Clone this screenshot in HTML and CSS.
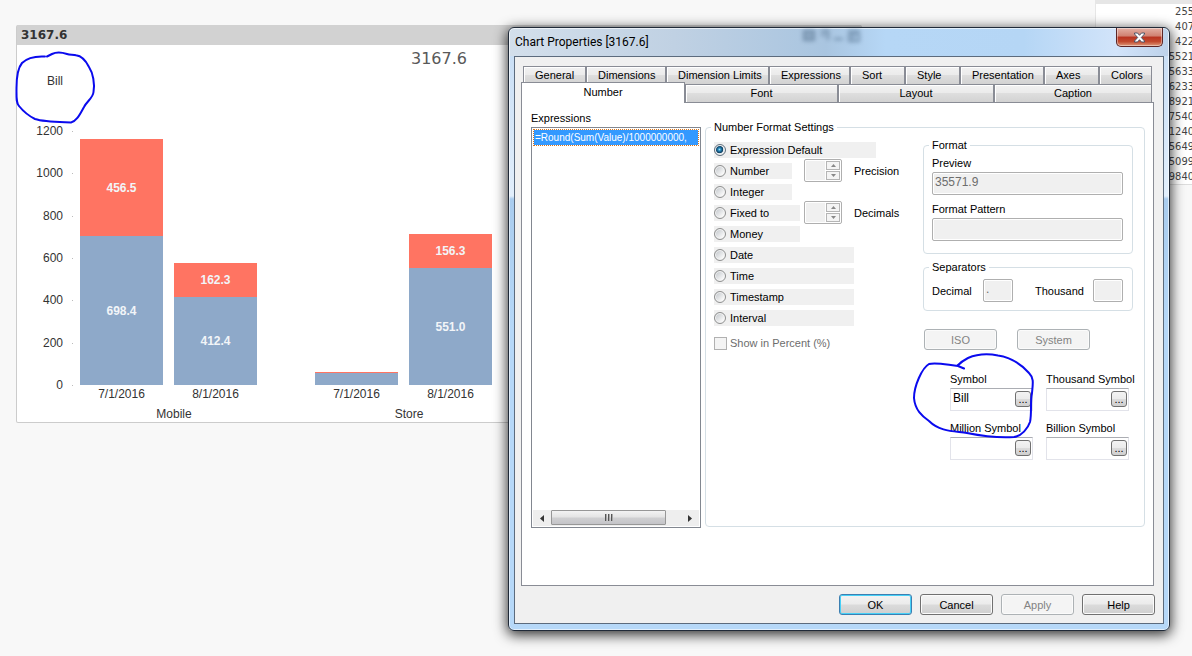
FILE: index.html
```html
<!DOCTYPE html>
<html lang="en">
<head>
<meta charset="utf-8">
<title>Chart Properties</title>
<link rel="stylesheet" href="styles.css">
</head>
<body>
<main class="desktop">
  <section class="chart">
    <h2 class="chart-caption">3167.6</h2>
    <div class="chart-body">
      <h3 class="chart-title">3167.6</h3>
      <p class="unit">Bill</p>
      <div class="chart-area">
        <ul class="axis">
          <li>1200</li><li>1000</li><li>800</li><li>600</li><li>400</li><li>200</li><li>0</li>
        </ul>
        <div class="groups">
          <div class="group">
            <div class="bars">
              <div class="bar"><span class="top" style="height:97px">456.5</span><span class="base" style="height:149px">698.4</span></div>
              <div class="bar"><span class="top" style="height:34px">162.3</span><span class="base" style="height:88px">412.4</span></div>
            </div>
            <div class="dates"><span>7/1/2016</span><span>8/1/2016</span></div>
            <p class="group-name">Mobile</p>
          </div>
          <div class="group">
            <div class="bars">
              <div class="bar"><span class="top" style="height:1px"></span><span class="base" style="height:12px"></span></div>
              <div class="bar"><span class="top" style="height:34px">156.3</span><span class="base" style="height:117px">551.0</span></div>
            </div>
            <div class="dates"><span>7/1/2016</span><span>8/1/2016</span></div>
            <p class="group-name">Store</p>
          </div>
        </div>
      </div>
    </div>
  </section>

  <table class="sheet">
    <thead><tr><th></th></tr></thead>
    <tbody>
      <tr><td>255</td></tr><tr><td>407</td></tr><tr><td>422</td></tr><tr><td>5521</td></tr>
      <tr><td>5633</td></tr><tr><td>6233</td></tr><tr><td>8921</td></tr><tr><td>7540</td></tr>
      <tr><td>1240</td></tr><tr><td>5649</td></tr><tr><td>5099</td></tr><tr><td>9840</td></tr>
    </tbody>
  </table>

  <section class="dialog" role="dialog" aria-labelledby="dialog-title">
    <header class="titlebar">
      <h1 id="dialog-title">Chart Properties [3167.6]</h1>
      <svg class="ghost" width="62" height="16" viewBox="0 0 62 16" aria-hidden="true"><path d="M3 3h10v9H3zM6 3v9M10 3v9M20 3h7v9M20 7h4M33 11h9M47 3h12M48 6h10v7H48zM52 6v6" fill="none" stroke="#3d5a78" stroke-width="2"/></svg>
      <button class="close" aria-label="Close">
        <svg width="13" height="11" viewBox="0 0 13 11"><path d="M1.5 1h3l2 2.3L8.500 1h3v1L8.300 5.500l3.200 3.500v1h-3L6.500 7.700 4.500 10h-3V9l3.200-3.500L1.500 2z" fill="#fff" stroke="#4c5468"/></svg>
      </button>
    </header>
    <div class="client">
      <nav class="tabs" role="tablist">
        <div class="tab-row first">
          <button class="tab" role="tab">General</button><button class="tab" role="tab">Dimensions</button><button class="tab" role="tab">Dimension Limits</button><button class="tab" role="tab">Expressions</button><button class="tab" role="tab">Sort</button><button class="tab" role="tab">Style</button><button class="tab" role="tab">Presentation</button><button class="tab" role="tab">Axes</button><button class="tab" role="tab">Colors</button>
        </div>
        <div class="tab-row second">
          <button class="tab selected" role="tab" aria-selected="true">Number</button><button class="tab" role="tab">Font</button><button class="tab" role="tab">Layout</button><button class="tab" role="tab">Caption</button>
        </div>
      </nav>
      <div class="page">
        <div class="expressions">
          <p class="label" id="expr-label">Expressions</p>
          <div class="listbox" role="listbox" aria-labelledby="expr-label">
            <div class="option" role="option" aria-selected="true">=Round(Sum(Value)/1000000000,</div>
            <div class="scrollbar">
              <button class="arrow" aria-label="Scroll left"><svg width="4" height="7" viewBox="0 0 4 7"><path d="M4 0v7L0 3.500z" fill="#333"/></svg></button>
              <div class="thumb"><i></i><i></i><i></i></div>
              <button class="arrow" aria-label="Scroll right"><svg width="4" height="7" viewBox="0 0 4 7"><path d="M0 0v7l4-3.500z" fill="#333"/></svg></button>
            </div>
          </div>
        </div>
        <fieldset class="box settings">
          <legend>Number Format Settings</legend>
          <div class="settings-grid">
            <div class="formats">
              <div class="format"><label class="radio w-default"><input type="radio" name="f" checked>Expression Default</label></div>
              <div class="format"><div class="lead"><label class="radio w-short"><input type="radio" name="f">Number</label></div>
                <span class="spinner"><input id="precision" disabled><span class="steps"><button disabled aria-label="Up"><svg width="5" height="3" viewBox="0 0 5 3"><path d="M0 3h5L2.500 0z" fill="#888"/></svg></button><button disabled aria-label="Down"><svg width="5" height="3" viewBox="0 0 5 3"><path d="M0 0h5L2.500 3z" fill="#888"/></svg></button></span></span>
                <label class="side" for="precision">Precision</label></div>
              <div class="format"><label class="radio w-short"><input type="radio" name="f">Integer</label></div>
              <div class="format"><div class="lead"><label class="radio w-medium"><input type="radio" name="f">Fixed to</label></div>
                <span class="spinner"><input id="decimals" disabled><span class="steps"><button disabled aria-label="Up"><svg width="5" height="3" viewBox="0 0 5 3"><path d="M0 3h5L2.500 0z" fill="#888"/></svg></button><button disabled aria-label="Down"><svg width="5" height="3" viewBox="0 0 5 3"><path d="M0 0h5L2.500 3z" fill="#888"/></svg></button></span></span>
                <label class="side" for="decimals">Decimals</label></div>
              <div class="format"><label class="radio w-medium"><input type="radio" name="f">Money</label></div>
              <div class="format"><label class="radio w-long"><input type="radio" name="f">Date</label></div>
              <div class="format"><label class="radio w-long"><input type="radio" name="f">Time</label></div>
              <div class="format"><label class="radio w-long"><input type="radio" name="f">Timestamp</label></div>
              <div class="format"><label class="radio w-long"><input type="radio" name="f">Interval</label></div>
              <label class="percent"><input type="checkbox" disabled>Show in Percent (%)</label>
            </div>
            <div class="details">
              <fieldset class="box pattern">
                <legend>Format</legend>
                <label for="preview">Preview</label>
                <input class="field" id="preview" value="35571.9" disabled>
                <label for="pattern">Format Pattern</label>
                <input class="field" id="pattern" disabled>
              </fieldset>
              <fieldset class="box separators">
                <legend>Separators</legend>
                <div class="separator-row">
                  <label for="dec">Decimal</label><input class="field" id="dec" value="." disabled>
                  <label class="thousand" for="tho">Thousand</label><input class="field" id="tho" disabled>
                </div>
              </fieldset>
              <div class="presets"><button class="button" disabled>ISO</button><button class="button" disabled>System</button></div>
              <div class="symbols">
                <div class="symbol"><label for="s1">Symbol</label><div class="entry"><input id="s1" value="Bill"><button aria-label="Edit symbol">...</button></div></div>
                <div class="symbol"><label for="s2">Thousand Symbol</label><div class="entry"><input id="s2"><button aria-label="Edit thousand symbol">...</button></div></div>
                <div class="symbol"><label for="s3">Million Symbol</label><div class="entry"><input id="s3"><button aria-label="Edit million symbol">...</button></div></div>
                <div class="symbol"><label for="s4">Billion Symbol</label><div class="entry"><input id="s4"><button aria-label="Edit billion symbol">...</button></div></div>
              </div>
            </div>
          </div>
        </fieldset>
      </div>
      <footer class="actions">
        <button class="button primary">OK</button><button class="button">Cancel</button><button class="button" disabled>Apply</button><button class="button">Help</button>
      </footer>
    </div>
  </section>

  <svg class="ink" width="1192" height="656" viewBox="0 0 1192 656" aria-hidden="true">
    <path d="M45 56.500C36 56 27 58 22 63C17 69 16.500 79 16.500 88C16.500 97 16 103 19 106C23 111 29 116 35 119C44 122 59 122 71 122.500C77 121 80 114 84 107C87 101 93 98 93.500 92C95 84 93 73 89 67C86 61 82 56 76 55.300C73 54.500 70 55 67 54C61 52 56 52 52 54L47 56.500"/>
    <path d="M964 368.500L958 366C948 365 936 362 929 364C922 368 914 386 914 398C915 410 922 416 929 421C940 432 955 431 967 433C982 436 999 438 1014 437C1022 436 1028 428 1030 422C1032 413 1030 402 1032 393C1033 383 1034 378 1029 373C1020 363 1008 357 998 355.500C985 353 975 355 968 358C962 361 960 363 957 366"/>
  </svg>
</main>
</body>
</html>
```

FILE: styles.css
```css
* { box-sizing: border-box; }
body {
  margin: 0;
  background: #f8f8f8;
  color: #000;
  font: 11px/14px "Liberation Sans", Arial, sans-serif;
}
h1, h2, h3, p, ul { margin: 0; padding: 0; font-weight: normal; }
button, input { margin: 0; padding: 0; font: inherit; color: inherit; }
.desktop { position: relative; min-height: 100vh; overflow: hidden; }

/* Chart window */
.chart {
  position: absolute;
  left: 16px;
  top: 25px;
  width: 846px;
  color: #333;
  background: #fff;
  border: 1px solid #ccc;
  border-top: 0;
  border-radius: 2px;
  font-size: 12px;
}
.chart-caption {
  padding: 0 4px;
  background: #d2d2d2;
  font: bold 12px/20px "DejaVu Sans", Verdana, sans-serif;
}
.chart-title {
  padding-top: 4px;
  text-align: center;
  color: #595959;
  font: 16px/20px "DejaVu Sans", Verdana, sans-serif;
}
.unit { width: 76px; padding-top: 5px; text-align: center; }
.chart-area { display: flex; margin-top: 36px; }
.axis {
  display: flex;
  flex-direction: column;
  justify-content: space-between;
  width: 56px;
  height: 268px;
  list-style: none;
  text-align: right;
}
.axis li { position: relative; padding-right: 10px; }
.axis li::after {
  content: "";
  position: absolute;
  right: 0;
  top: 7px;
  width: 1px;
  height: 1px;
  background: #bbb;
}
.groups { display: flex; gap: 47px; padding: 7px 0 0 7px; }
.bars, .dates { display: flex; align-items: flex-end; }
.bars { height: 254px; gap: 11px; }
.bar { width: 83px; }
.bar span {
  display: flex;
  align-items: center;
  justify-content: center;
  color: #f2f5f8;
  font-weight: bold;
}
.top { background: #ff7462; }
.base { background: #8ea9c9; }
.dates { gap: 11px; padding: 2px 11px 5px 0; }
.dates span { width: 83px; text-align: center; }
.group-name { text-align: center; line-height: 16px; }

/* Data sheet at the screen edge */
.sheet {
  position: absolute;
  left: 1095px;
  top: 0;
  width: 99px;
  border-collapse: collapse;
  background: #fff;
  border-left: 1px solid #e6e6e6;
  border-bottom: 1px solid #ddd;
  color: #444;
  font: 11px/15px "DejaVu Sans Condensed", "Noto Sans", sans-serif;
}
.sheet th { height: 4px; padding: 0; background: #e6e6e6; }
.sheet td { padding: 0; text-align: right; }

/* Dialog frame */
.dialog {
  position: absolute;
  left: 508px;
  top: 27px;
  width: 662px;
  padding: 0 5px 6px;
  border: 1px solid #202a38;
  border-radius: 6px;
  background:
    linear-gradient(90deg, #d3dfeb 0, #c0d1e3 25%, #a9c5e0 48%, #b6d7f6 57%, #b5d6f5 78%, #d2e4fa 92%, #bdd2ea 100%) top / 100% 28px no-repeat,
    linear-gradient(#cadff5 28px, #e2effc 168px, #a9ccee 171px, #b6d8f8 300px, #b6d8f8);
  box-shadow: inset 0 0 0 1px rgba(255, 255, 255, .6), 0 3px 13px 1px rgba(0, 0, 0, .8);
}
.titlebar { display: flex; align-items: flex-start; height: 28px; }
.titlebar h1 {
  flex: 1;
  padding-left: 1px;
  font: 12px/28px Roboto, "Open Sans", sans-serif;
}
.ghost { margin-right: 253px; filter: blur(2px); opacity: .55; }
.close {
  display: flex;
  align-items: center;
  justify-content: center;
  width: 47px;
  height: 19px;
  margin-right: 1px;
  border: 1px solid #5c2525;
  border-top: 0;
  border-radius: 0 0 5px 5px;
  background: linear-gradient(#e3b0a5, #d08070 45%, #b83220 50%, #c24a2e 75%, #df9a7b);
  box-shadow: inset 0 0 0 1px rgba(255, 255, 255, .4);
}
.client {
  padding: 9px 9px 8px 6px;
  border: 1px solid #5c6b7d;
  background: #f0f0f0;
}

/* Tabs */
.tab-row { display: grid; padding-right: 2px; }
.first { grid-template-columns: 63fr 80fr 103fr 81fr 55fr 55fr 84fr 55fr 53fr; padding-left: 2px; }
.second { grid-template-columns: 164fr 153fr 156fr 158fr; align-items: end; }
.tab {
  height: 18px;
  padding: 0;
  border: 1px solid #898c95;
  border-width: 1px 1px 0 1px;
  background: linear-gradient(#f2f2f2, #ebebeb 45%, #dedede 50%, #d2d2d2);
  box-shadow: inset 1px 1px #fff;
  line-height: 17px;
  white-space: nowrap;
}
.first .tab { padding-left: 11px; text-align: left; }
.tab.selected {
  position: relative;
  height: 21px;
  margin: -3px 0 -1px;
  padding-bottom: 2px;
  background: #fff;
}
.page {
  display: flex;
  gap: 4px;
  padding: 8px 8px 57px 9px;
  border: 1px solid #898c95;
  background: #fff;
}
.expressions { display: flex; flex-direction: column; gap: 2px; width: 170px; }
.listbox {
  display: flex;
  flex: 1;
  flex-direction: column;
  justify-content: space-between;
  padding: 1px;
  border: 1px solid #828790;
}
.option {
  overflow: hidden;
  padding-left: 1px;
  border: 1px dotted #d8741c;
  background: #3399ff;
  background-clip: padding-box;
  color: #fff;
  font-size: 10px;
  line-height: 15px;
  white-space: nowrap;
}
.scrollbar { display: flex; height: 16px; background: #eee; }
.arrow {
  display: flex;
  align-items: center;
  justify-content: center;
  width: 18px;
  border: 0;
  background: none;
}
.arrow:last-child { margin-left: auto; }
.thumb {
  display: flex;
  align-items: center;
  justify-content: center;
  gap: 2px;
  width: 115px;
  height: 15px;
  border: 1px solid #979797;
  border-radius: 1px;
  background: linear-gradient(#f3f3f3, #e4e4e4 48%, #d0d0d2 52%, #c4c4c8);
}
.thumb i { width: 1px; height: 7px; background: #555; box-shadow: 1px 0 #aaa; }

/* Group boxes */
.box { min-width: 0; margin: 0; border: 1px solid #d5dfe5; border-radius: 4px; }
.box legend { margin-left: -3px; padding: 0 3px; }
.settings { flex: 1; margin: 9px 0 1px; padding: 4px 11px 66px 8px; }
.settings-grid { display: grid; grid-template-columns: 209px 1fr; }
.formats { padding-top: 1px; }
.format { display: flex; align-items: center; height: 21px; }
.lead { width: 90px; }
.radio { display: flex; align-items: center; gap: 4px; height: 16px; background: #f0f0f0; }
.w-default { width: 162px; }
.w-short { width: 78px; }
.w-medium { width: 86px; }
.w-long { width: 140px; }
.radio input {
  appearance: none;
  width: 12px;
  height: 12px;
  border: 1px solid #8e8f8f;
  border-radius: 50%;
  background: linear-gradient(135deg, #c8ccd0 15%, #fafafa 80%);
  box-shadow: inset 0 0 0 1px #f4f4f4;
}
.radio input:checked {
  border-color: #5f6f7d;
  background: radial-gradient(circle at 45% 45%, #9be3ff 0, #2583b5 20%, #0b3a5c 44%, #dfe5e9 52%);
}
.spinner {
  display: flex;
  flex: none;
  width: 38px;
  height: 23px;
  padding: 1px;
  border: 1px solid #afafaf;
  border-radius: 2px;
  background: #fff;
}
.spinner input { width: 19px; border: 0; background: #f0f0f0; }
.steps { display: flex; flex: 1; flex-direction: column; gap: 1px; padding-left: 1px; }
.steps button {
  display: flex;
  flex: 1;
  align-items: center;
  justify-content: center;
  border: 1px solid #b5b5b5;
  background: #f4f4f4;
}
.side { padding-left: 12px; }
.percent { display: flex; align-items: center; gap: 3px; padding-top: 8px; color: #6d6d6d; }
.percent input {
  appearance: none;
  width: 13px;
  height: 13px;
  border: 1px solid #b1b1b1;
  background: #f4f4f4;
}
.pattern { padding: 4px 9px 12px 8px; }
.pattern label { display: block; margin-bottom: 2px; }
.field {
  display: block;
  width: 100%;
  height: 23px;
  padding: 0 2px 3px;
  border: 1px solid #afafaf;
  border-radius: 2px;
  background: #f0f0f0;
  box-shadow: inset 0 0 0 1px #fff;
  color: #6d6d6d;
  font-size: 12px;
}
.pattern .field + label { margin-top: 7px; }
.separators { margin-top: 6px; padding: 5px 9px 8px 8px; }
.separator-row { display: flex; align-items: center; }
.separator-row label { width: 51px; }
.separator-row .thousand { width: 58px; margin-left: auto; }
.separator-row .field { width: 30px; }
.presets { display: flex; gap: 20px; padding: 18px 0 0 1px; }
.button {
  width: 73px;
  height: 21px;
  border: 1px solid #707070;
  border-radius: 3px;
  background: linear-gradient(#f3f3f3, #ebebeb 48%, #dbdbdb 52%, #cfcfcf);
  box-shadow: inset 0 0 0 1px #fbfbfb;
}
.button.primary { border-color: #3c7fb1; box-shadow: inset 0 0 0 1px #46d0f7; }
.button:disabled { border-color: #adb2b5; background: #f4f4f4; color: #838383; }
.symbols {
  display: grid;
  grid-template-columns: 83px 83px;
  gap: 10px 13px;
  padding: 22px 0 0 27px;
}
.symbol label { display: block; margin-bottom: 2px; white-space: nowrap; }
.entry {
  display: flex;
  height: 23px;
  padding: 2px 1px 3px 2px;
  border: 1px solid #e2e3ea;
  border-top-color: #abadb3;
}
.entry input {
  width: 62px;
  padding-bottom: 2px;
  border: 0;
  outline: 0;
  background: none;
  font-size: 12px;
}
.entry button {
  width: 16px;
  border: 1px solid #707070;
  border-radius: 3px;
  background: linear-gradient(#f3f3f3, #ebebeb 48%, #dbdbdb 52%, #cfcfcf);
  line-height: 14px;
}
.actions { display: flex; justify-content: flex-end; gap: 8px; margin: 8px -1px 0 0; }

/* Pen marks drawn over both windows */
.ink {
  position: absolute;
  left: 0;
  top: 0;
  fill: none;
  stroke: #0a0aee;
  stroke-width: 2;
  stroke-linejoin: round;
  stroke-linecap: round;
  pointer-events: none;
}
```
